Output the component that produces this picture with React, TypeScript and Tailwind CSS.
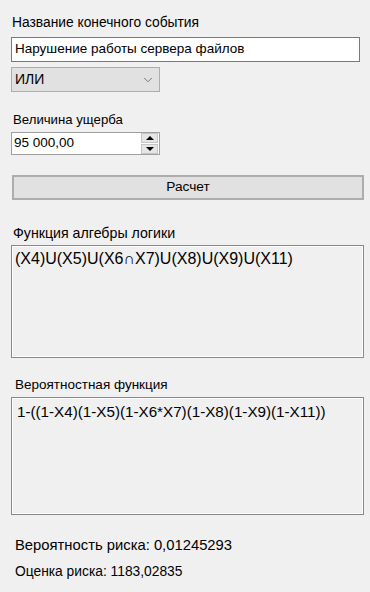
import { ChevronDown } from "lucide-react"

const font = { fontFamily: '"Liberation Sans", Arial, sans-serif' }

function Spin() {
  return (
    <div className="flex flex-col gap-[1px] w-[17px] h-[21px] mr-[1px]">
      <div className="flex-1 flex items-center justify-center bg-[#e5e5e5] border border-[#c6c6c6]">
        <div className="w-0 h-0 border-x-[4px] border-x-transparent border-b-[4px] border-b-black" />
      </div>
      <div className="flex-1 flex items-center justify-center bg-[#e5e5e5] border border-[#c6c6c6]">
        <div className="w-0 h-0 border-x-[4px] border-x-transparent border-t-[4px] border-t-black" />
      </div>
    </div>
  )
}

export default function App() {
  return (
    <div className="w-[370px] h-[592px] bg-[#f0f0f0] text-black overflow-hidden" style={font}>
      <div className="flex flex-col pl-[11px] pt-[15px]">
        {/* event name */}
        <div className="h-[16px] leading-[16px] text-[13.8px] pl-[1px]">Название конечного события</div>
        <div className="mt-[6px] w-[349px] h-[25px] bg-white border border-[#7a7a7a] flex items-center pl-[3px] text-[13.5px]">
          Нарушение работы сервера файлов
        </div>
        <div className="mt-[5px] w-[149px] h-[25px] bg-[#e1e1e1] border border-[#adadad] flex items-center justify-between pl-[3px] pr-[4px] text-[14px]">
          <span>ИЛИ</span>
          <ChevronDown size={14} strokeWidth={1.3} className="text-[#555]" />
        </div>

        {/* damage */}
        <div className="mt-[20px] h-[16px] leading-[16px] text-[13.2px] pl-[2px]">Величина ущерба</div>
        <div className="mt-[4px] w-[149px] h-[23px] bg-white border border-[#a0a0a0] flex items-center justify-between text-[13.5px]">
          <span className="pl-[2px]">95 000,00</span>
          <Spin />
        </div>

        {/* calc button */}
        <div className="mt-[20px] ml-[1px] w-[352px] h-[25px] bg-[#e1e1e1] border-2 border-[#adadad] flex items-center justify-center text-[13.7px]">
          Расчет
        </div>

        {/* logic function */}
        <div className="mt-[25px] h-[16px] leading-[16px] text-[14.2px] pl-[2px]">Функция алгебры логики</div>
        <div className="mt-[4px] w-[353px] h-[113px] border border-[#8a8a8a] shadow-[inset_-1px_-1px_0_#fff,inset_1px_1px_0_#fff] px-[3px] pt-[3px] text-[16px] leading-[20px]">
          (X4)U(X5)U(X6∩X7)U(X8)U(X9)U(X11)
        </div>

        {/* probability function */}
        <div className="mt-[19px] h-[16px] leading-[16px] text-[13.5px] pl-[4px]">Вероятностная функция</div>
        <div className="mt-[4px] w-[353px] h-[118px] border border-[#8a8a8a] shadow-[inset_-1px_-1px_0_#fff,inset_1px_1px_0_#fff] px-[5px] pt-[4px] text-[15.2px] leading-[20px]">
          1-((1-X4)(1-X5)(1-X6*X7)(1-X8)(1-X9)(1-X11))
        </div>

        {/* results */}
        <div className="mt-[22px] h-[16px] leading-[16px] text-[14.8px] pl-[4px]">Вероятность риска: 0,01245293</div>
        <div className="mt-[11px] h-[16px] leading-[16px] text-[13.8px] pl-[4px]">Оценка риска: 1183,02835</div>
      </div>
    </div>
  )
}
